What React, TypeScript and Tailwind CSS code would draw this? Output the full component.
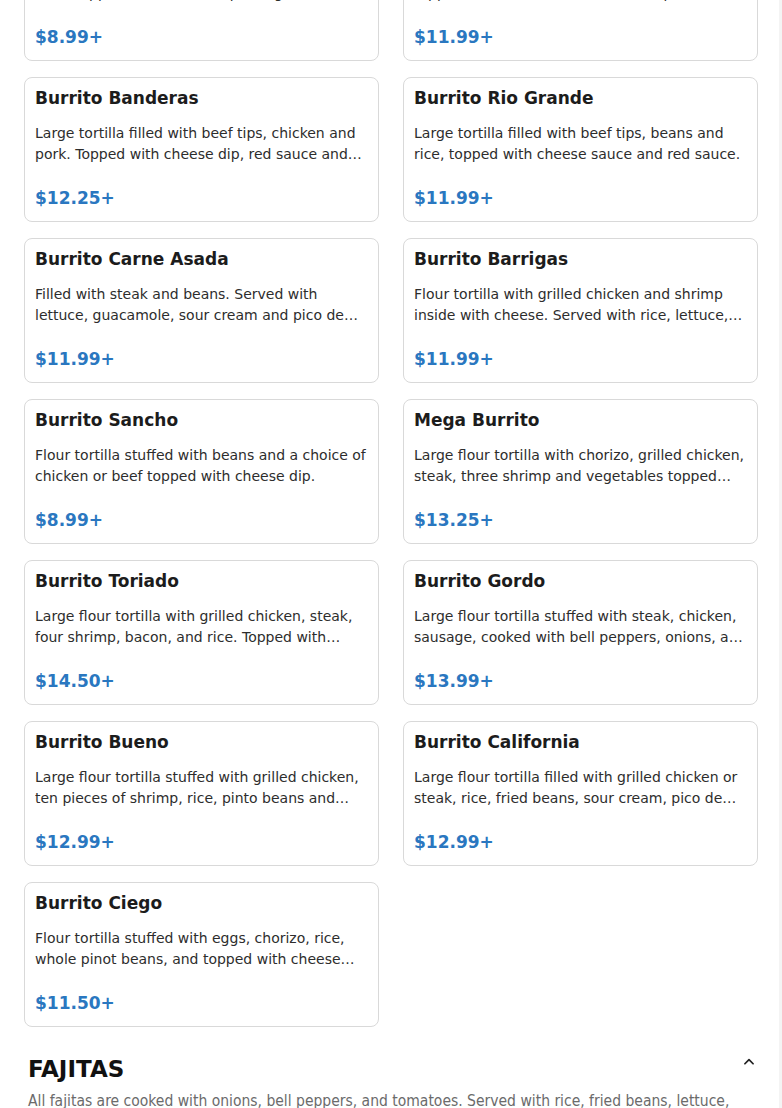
import * as React from "react";

interface Item {
  name: string;
  desc: string;
  price: string;
}

const items: Item[] = [
  { name: "Burrito Supreme", desc: "Flour tortilla stuffed with chicken or ground beef, topped with cheese dip and guacamole, sour cream.", price: "$8.99+" },
  { name: "Burrito Deluxe", desc: "Large tortilla with grilled chicken and steak, topped with cheese sauce, lettuce, pico de gallo and sour cream.", price: "$11.99+" },
  { name: "Burrito Banderas", desc: "Large tortilla filled with beef tips, chicken and pork. Topped with cheese dip, red sauce and green sauce.", price: "$12.25+" },
  { name: "Burrito Rio Grande", desc: "Large tortilla filled with beef tips, beans and rice, topped with cheese sauce and red sauce.", price: "$11.99+" },
  { name: "Burrito Carne Asada", desc: "Filled with steak and beans. Served with lettuce, guacamole, sour cream and pico de gallo.", price: "$11.99+" },
  { name: "Burrito Barrigas", desc: "Flour tortilla with grilled chicken and shrimp inside with cheese. Served with rice, lettuce, sour cream and pico de gallo.", price: "$11.99+" },
  { name: "Burrito Sancho", desc: "Flour tortilla stuffed with beans and a choice of chicken or beef topped with cheese dip.", price: "$8.99+" },
  { name: "Mega Burrito", desc: "Large flour tortilla with chorizo, grilled chicken, steak, three shrimp and vegetables topped with cheese dip.", price: "$13.25+" },
  { name: "Burrito Toriado", desc: "Large flour tortilla with grilled chicken, steak, four shrimp, bacon, and rice. Topped with cheese dip and red sauce.", price: "$14.50+" },
  { name: "Burrito Gordo", desc: "Large flour tortilla stuffed with steak, chicken, sausage, cooked with bell peppers, onions, and tomatoes.", price: "$13.99+" },
  { name: "Burrito Bueno", desc: "Large flour tortilla stuffed with grilled chicken, ten pieces of shrimp, rice, pinto beans and cheese dip.", price: "$12.99+" },
  { name: "Burrito California", desc: "Large flour tortilla filled with grilled chicken or steak, rice, fried beans, sour cream, pico de gallo and lettuce.", price: "$12.99+" },
  { name: "Burrito Ciego", desc: "Flour tortilla stuffed with eggs, chorizo, rice, whole pinot beans, and topped with cheese sauce and red sauce.", price: "$11.50+" },
];

const font = { fontFamily: '"DejaVu Sans", sans-serif' };
const condensed = { fontFamily: '"DejaVu Sans Condensed", "DejaVu Sans", sans-serif' };

const MenuCard: React.FC<{ item: Item }> = ({ item }) => (
  <div className="flex flex-col h-[145px] px-[10px] pt-[10px] pb-[12px] bg-white border border-[#d9d9d9] rounded-lg">
    <div className="text-[17px] leading-[21px] font-bold text-[#1c1c1c]">{item.name}</div>
    <p className="mt-[14px] text-[14px] leading-[21px] text-[#2d2d2d] line-clamp-2">{item.desc}</p>
    <div className="mt-auto text-[17px] leading-[22px] font-bold text-[#2a77c0]">{item.price}</div>
  </div>
);

export default function App() {
  return (
    <div className="flex bg-white h-[1108px] overflow-hidden" style={font}>
      <main className="w-[779px] pl-6 pr-[21px]">
        <div className="grid grid-cols-2 gap-x-[24px] gap-y-[16px] -mt-[84px]">
          {items.map((item, i) => (
            <MenuCard key={i} item={item} />
          ))}
        </div>

        <section className="mt-[26px] pl-1">
          <div className="flex items-center justify-between">
            <h2 className="text-[23px] leading-[32px] font-bold text-[#111]">FAJITAS</h2>
            <svg width="14" height="14" viewBox="0 0 24 24" fill="none" stroke="#222" strokeWidth="3" strokeLinecap="round" strokeLinejoin="round" className="mr-[2px] -mt-[14px]">
              <path d="M5 15l7-7 7 7" />
            </svg>
          </div>
          <p className="mt-[5px] text-[15.5px] leading-[22px] text-[#6b6b6b] font-stretch-condensed" style={condensed}>
            All fajitas are cooked with onions, bell peppers, and tomatoes. Served with rice, fried beans, lettuce, guacamole, sour cream, pico de gallo and tortillas.
          </p>
        </section>
      </main>
      <div className="w-[3px] bg-[#f4f4f4]" />
    </div>
  );
}
